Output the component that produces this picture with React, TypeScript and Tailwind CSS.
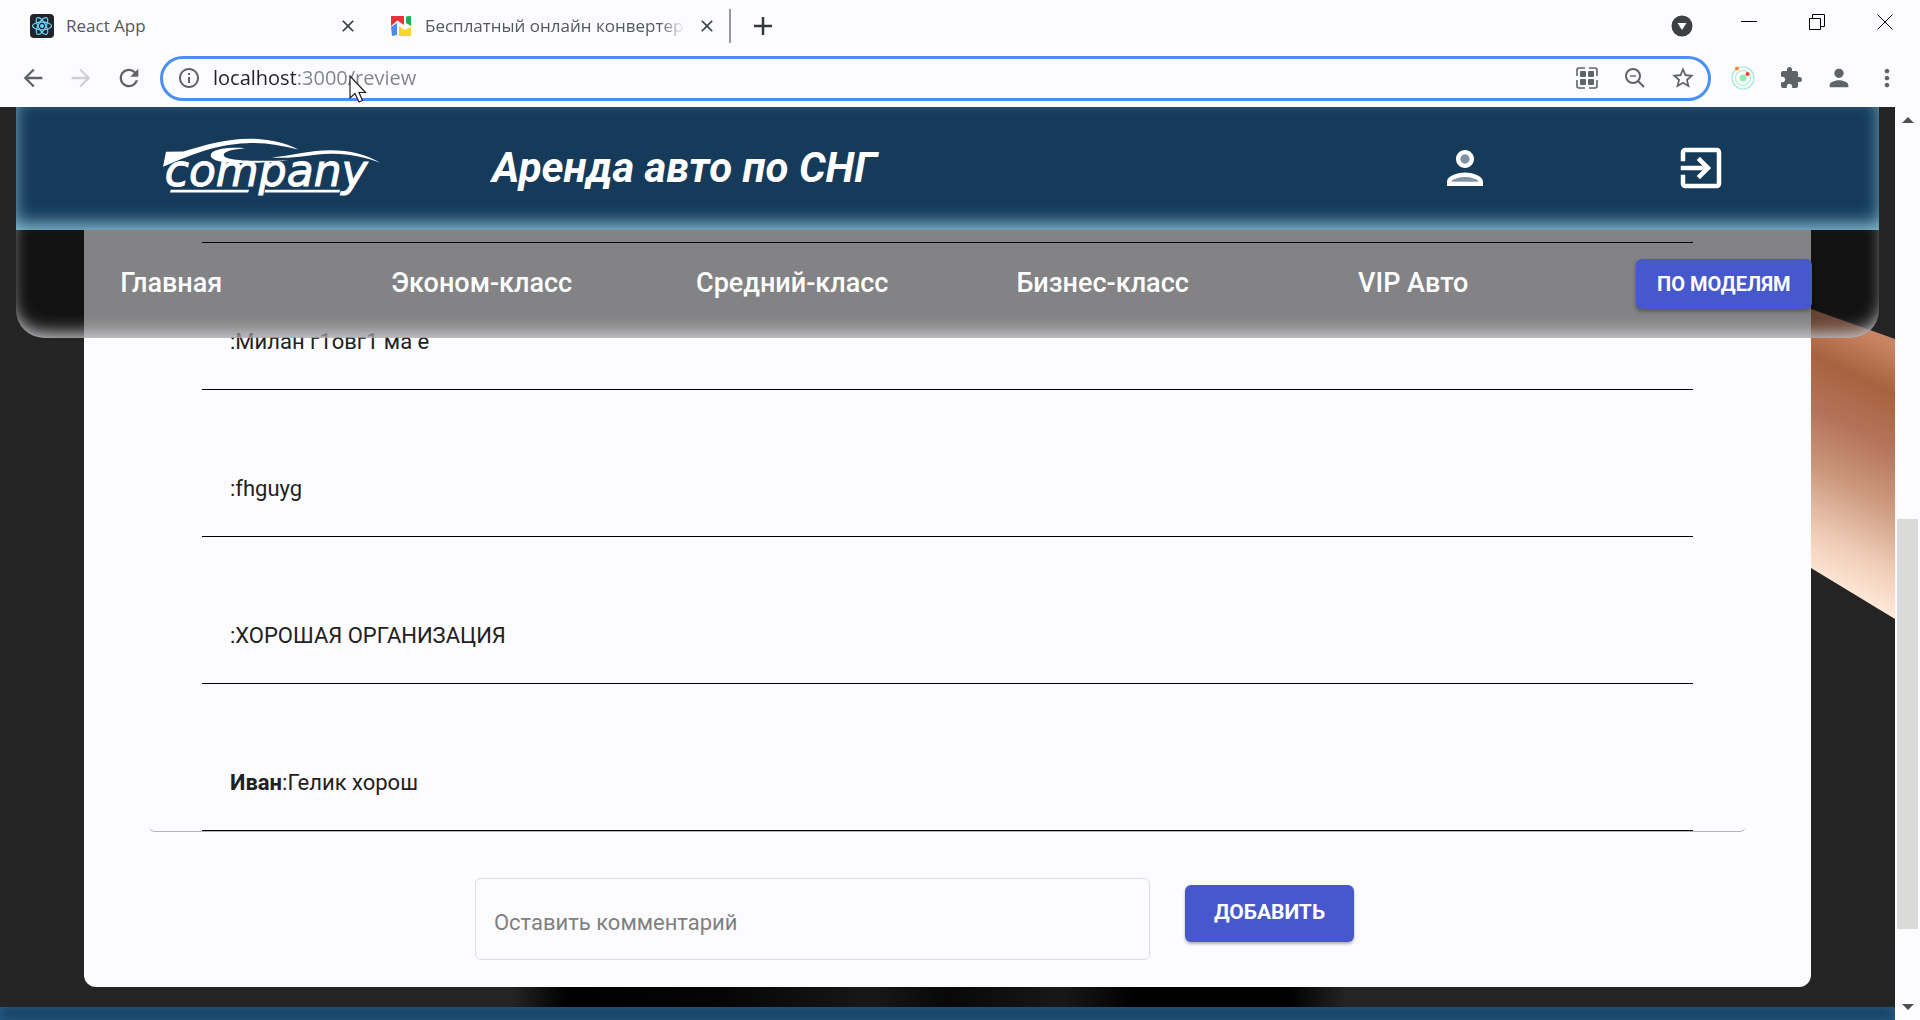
import type { ReactNode } from "react";
import {
  MdArrowBack,
  MdArrowForward,
  MdClose,
  MdExitToApp,
  MdExtension,
  MdInfoOutline,
  MdMoreVert,
  MdPerson,
  MdRefresh,
  MdStarBorder,
} from "react-icons/md";

const navItems = ["Главная", "Эконом-класс", "Средний-класс", "Бизнес-класс", "VIP Авто"];

const reviews = [
  { author: "", text: "" },
  { author: "", text: "Милан г1овг1 ма е" },
  { author: "", text: "fhguyg" },
  { author: "", text: "ХОРОШАЯ ОРГАНИЗАЦИЯ" },
  { author: "Иван", text: "Гелик хорош" },
];

function ReactFavicon() {
  return (
    <svg viewBox="0 0 24 24" className="size-6 shrink-0" aria-hidden="true">
      <rect width="24" height="24" rx="4" fill="#20232a" />
      <g fill="none" stroke="#61dafb" strokeWidth="1.2">
        <ellipse cx="12" cy="12" rx="9.5" ry="3.8" />
        <ellipse cx="12" cy="12" rx="9.5" ry="3.8" transform="rotate(60 12 12)" />
        <ellipse cx="12" cy="12" rx="9.5" ry="3.8" transform="rotate(120 12 12)" />
      </g>
      <circle cx="12" cy="12" r="2" fill="#61dafb" />
    </svg>
  );
}

function ConverterFavicon() {
  return (
    <svg viewBox="0 0 20 20" className="size-5 shrink-0" aria-hidden="true">
      <path d="M0 0H13V9L6.500 4.500L0 10Z" fill="#e5343c" />
      <path d="M15 1Q15 0 20 0V10L15 7Z" fill="#1fae53" />
      <path d="M0 11L6 7V19L1 20Z" fill="#4a8cf0" />
      <path d="M8 10L13.500 14L20 11V20H8Z" fill="#fbd62c" />
    </svg>
  );
}

function CompanyLogo() {
  return (
    <svg viewBox="36 40 656 212" className="h-[71px] w-[219px] shrink-0" fill="#fff" role="img" aria-label="company">
      <path d="M39 144L48 99L100 98C170 78 220 61 300 60C360 60 410 75 445 92C390 80 350 71 290 73C190 77 110 113 39 144Z" />
      <path d="M285 88C230 84 182 92 182 109C182 128 230 134 300 132C350 131 400 127 415 124C350 127 225 129 221 109C219 97 250 91 285 88Z" />
      <path d="M365 116C430 109 480 94 540 94C600 94 650 107 690 132C640 114 590 103 540 105C480 107 430 121 365 116Z" />
      <text
        x="44"
        y="202"
        fontSize="132"
        fontStyle="italic"
        fontFamily="DejaVu Sans, sans-serif"
        stroke="#fff"
        strokeWidth="3"
      >
        company
      </text>
      <path d="M62 213H297L294 221H60ZM345 213H570L567 221H343Z" />
    </svg>
  );
}

function PersonTwoTone() {
  return (
    <svg viewBox="0 0 24 24" className="size-[54px]" fill="currentColor" aria-hidden="true">
      <path opacity="0.45" d="M12 16c-2.690 0-5.770 1.280-6 2h12c-.2-.71-3.300-2-6-2z" />
      <circle opacity="0.45" cx="12" cy="8" r="2" />
      <path d="M12 14c-2.670 0-8 1.340-8 4v2h16v-2c0-2.660-5.330-4-8-4zm-6 4c.22-.72 3.310-2 6-2 2.700 0 5.800 1.290 6 2H6zm6-6c2.210 0 4-1.790 4-4s-1.790-4-4-4-4 1.790-4 4 1.790 4 4 4zm0-6c1.100 0 2 .9 2 2s-.9 2-2 2-2-.9-2-2 .9-2 2-2z" />
    </svg>
  );
}

function QrIcon() {
  return (
    <svg viewBox="0 0 22 22" className="size-[22px]" aria-hidden="true">
      <path
        d="M1 9V3Q1 1 3 1H9M13 1H19Q21 1 21 3V9M21 13V19Q21 21 19 21H13M9 21H3Q1 21 1 19V13"
        fill="none"
        stroke="#5f6368"
        strokeWidth="1.600"
      />
      <g fill="#5f6368">
        <rect x="4" y="4" width="6" height="6" rx="1" />
        <rect x="12" y="4" width="6" height="6" rx="1" />
        <rect x="4" y="12" width="6" height="6" rx="1" />
        <rect x="12" y="12" width="6" height="6" rx="1" />
      </g>
    </svg>
  );
}

function ZoomOutIcon() {
  return (
    <svg viewBox="0 0 20 20" className="size-5" fill="none" stroke="#5f6368" strokeWidth="2" aria-hidden="true">
      <circle cx="8" cy="8" r="7" />
      <path d="M13 13L19 19" />
      <path d="M5 8H11" strokeWidth="1.400" />
    </svg>
  );
}

function RadarIcon() {
  return (
    <svg viewBox="0 0 24 24" className="size-6" fill="none" aria-hidden="true">
      <circle cx="12" cy="12" r="11" stroke="#9fe8d8" strokeWidth="1.200" />
      <circle cx="12" cy="12" r="7.500" stroke="#a8f0c0" strokeWidth="1.200" />
      <circle cx="12" cy="12" r="3.500" fill="#8df0b8" />
      <circle cx="6" cy="2.500" r="2" fill="#f58a2c" />
      <circle cx="16.500" cy="8" r="2" fill="#ee4030" />
    </svg>
  );
}

function IconButton({ label, children }: { label: string; children: ReactNode }) {
  return (
    <button type="button" aria-label={label} className="flex size-12 shrink-0 items-center justify-center text-[#5f6368]">
      {children}
    </button>
  );
}

function BrowserChrome() {
  return (
    <div className="shrink-0 bg-[#fcfcff] font-['Open_Sans',sans-serif] text-[#3c4043]">
      <div className="flex h-[52px] items-center justify-between">
        <div className="flex items-center" role="tablist">
          <div className="flex w-[362px] items-center pr-1 pl-[30px]">
            <ReactFavicon />
            <button type="button" role="tab" aria-selected="true" className="ml-3 flex-1 text-left text-[17px] text-[#55585c]">
              React App
            </button>
            <button type="button" aria-label="Закрыть вкладку React App">
              <MdClose className="size-5" />
            </button>
          </div>
          <div className="flex w-[369px] items-center border-r-2 border-[#9a9a9e] py-1 pr-3 pl-[29px]">
            <ConverterFavicon />
            <button
              type="button"
              role="tab"
              aria-selected="false"
              className="mr-3 ml-[14px] flex-1 overflow-hidden [mask-image:linear-gradient(90deg,#000_90%,transparent)] text-left text-[17px] whitespace-nowrap text-[#55585c]"
            >
              Бесплатный онлайн конвертер
            </button>
            <button type="button" aria-label="Закрыть вкладку конвертера">
              <MdClose className="size-5" />
            </button>
          </div>
          <button type="button" aria-label="Новая вкладка" className="ml-[22px]">
            <svg viewBox="0 0 20 20" className="size-5" stroke="#35383b" strokeWidth="2.500" aria-hidden="true">
              <path d="M10 1V19M1 10H19" />
            </svg>
          </button>
        </div>
        <div className="flex items-center pr-[27px] text-black">
          <button type="button" aria-label="Поиск вкладок" className="mr-[48px]">
            <svg viewBox="0 0 22 22" className="size-[22px]" aria-hidden="true">
              <circle cx="11" cy="11" r="10.500" fill="#3c4043" />
              <path d="M6.500 8H15.500L11 15Z" fill="#fcfcff" />
            </svg>
          </button>
          <div className="flex gap-[52px] pb-2">
            <button type="button" aria-label="Свернуть">
              <svg viewBox="0 0 16 16" className="size-4" stroke="currentColor" aria-hidden="true">
                <path d="M0 7.500H16" />
              </svg>
            </button>
            <button type="button" aria-label="Восстановить">
              <svg viewBox="0 0 16 16" className="size-4" fill="none" stroke="currentColor" aria-hidden="true">
                <path d="M0.500 4.500H11.500V15.500H0.500ZM3.500 4V0.500H15.500V12.500H12" />
              </svg>
            </button>
            <button type="button" aria-label="Закрыть">
              <svg viewBox="0 0 16 16" className="size-4" stroke="currentColor" aria-hidden="true">
                <path d="M0.500 0.500L15.500 15.500M15.500 0.500L0.500 15.500" />
              </svg>
            </button>
          </div>
        </div>
      </div>

      <div className="flex h-[55px] items-center pr-[9px] pb-[3px] pl-[9px]">
        <IconButton label="Назад">
          <MdArrowBack className="size-7" />
        </IconButton>
        <IconButton label="Вперёд">
          <MdArrowForward className="size-7 text-[#cfd0d4]" />
        </IconButton>
        <IconButton label="Обновить">
          <MdRefresh className="size-7" />
        </IconButton>
        <div className="relative ml-[7px] flex h-[45px] flex-1 items-center rounded-full border-[3px] border-[#4a90f5] pr-px pl-[14px]">
          <MdInfoOutline className="size-6 shrink-0 text-[#5f6368]" />
          <input
            aria-label="Адресная строка"
            defaultValue="localhost:3000/review"
            className="ml-3 min-w-0 flex-1 bg-[linear-gradient(90deg,#202124_83px,#80848a_83px)] bg-clip-text text-xl text-transparent outline-none"
          />
          <svg viewBox="0 0 18 28" className="absolute top-4 left-[186px] h-7 w-[18px]" aria-hidden="true">
            <path d="M1 1V23L6 18.500L10 27L13.500 25.500L10 17.500H16.500Z" fill="#fff" stroke="#222" strokeWidth="1.200" />
          </svg>
          <IconButton label="QR-код">
            <QrIcon />
          </IconButton>
          <IconButton label="Масштаб">
            <ZoomOutIcon />
          </IconButton>
          <IconButton label="В закладки">
            <MdStarBorder className="size-[26px]" />
          </IconButton>
        </div>
        <div className="ml-2 flex">
          <IconButton label="Радар">
            <RadarIcon />
          </IconButton>
          <IconButton label="Расширения">
            <MdExtension className="size-6" />
          </IconButton>
          <IconButton label="Профиль">
            <MdPerson className="size-7" />
          </IconButton>
          <IconButton label="Меню">
            <MdMoreVert className="size-7" />
          </IconButton>
        </div>
      </div>
    </div>
  );
}

function SiteHeader() {
  return (
    <div className="absolute inset-x-4 top-0 z-10 text-white">
      <header className="flex h-[123px] items-center bg-[#153a5a] pr-[151px] pb-[2px] pl-[146px] shadow-[inset_0_-8px_18px_-2px_#8cc4d8]">
        <CompanyLogo />
        <h1 className="ml-[111px] text-[42px] leading-none font-bold whitespace-nowrap italic">Аренда авто по СНГ</h1>
        <div className="ml-auto flex gap-[182px]">
          <button type="button" aria-label="Личный кабинет">
            <PersonTwoTone />
          </button>
          <button type="button" aria-label="Выход">
            <MdExitToApp className="size-[54px]" />
          </button>
        </div>
      </header>
      <nav className="grid h-[108px] grid-cols-6 items-center justify-items-center rounded-b-[28px] bg-black/48 shadow-[inset_0_-10px_18px_-6px_#d8d8dc]">
        {navItems.map((item) => (
          <a key={item} href="#" className="pb-[2px] text-[27px] leading-8 font-medium whitespace-nowrap">
            {item}
          </a>
        ))}
        <button
          type="button"
          className="h-[50px] rounded-md bg-[#4757cc] px-[21px] text-xl font-bold whitespace-nowrap shadow-[0_2px_4px_rgba(0,0,0,0.4)]"
        >
          ПО МОДЕЛЯМ
        </button>
      </nav>
    </div>
  );
}

function HandBackdrop() {
  return (
    <svg viewBox="0 0 84 310" className="absolute top-[202px] right-0 h-[310px] w-[84px]" aria-hidden="true">
      <defs>
        <linearGradient id="skin" gradientUnits="userSpaceOnUse" x1="80" y1="0" x2="-40" y2="250">
          <stop offset="0" stopColor="#c98f74" />
          <stop offset="0.120" stopColor="#c98362" />
          <stop offset="0.270" stopColor="#a8623f" />
          <stop offset="0.450" stopColor="#b4735a" />
          <stop offset="0.650" stopColor="#cd9b80" />
          <stop offset="0.850" stopColor="#f0cdb8" />
          <stop offset="1" stopColor="#ffe9d8" />
        </linearGradient>
      </defs>
      <path d="M0 0L84 30V310L0 259Z" fill="url(#skin)" />
    </svg>
  );
}

function Reviews() {
  return (
    <main className="relative mx-[84px] rounded-b-xl bg-[#fcfcff] px-[65px] pb-[27px] text-[22px] text-[#212121]">
      <ul className="rounded-b-md border-b border-[#b5b5b8] px-[53px]">
        {reviews.map((review, i) => (
          <li key={i} className="flex h-[147px] items-center border-b border-black px-7 pt-[50px]">
            {review.text && (
              <p>
                <b>{review.author}</b>:{review.text}
              </p>
            )}
          </li>
        ))}
      </ul>
      <form className="mt-[46px] flex items-start justify-center gap-[35px] pr-[66px]" onSubmit={(e) => e.preventDefault()}>
        <input
          aria-label="Оставить комментарий"
          placeholder="Оставить комментарий"
          className="h-[82px] w-[42%] max-w-[675px] min-w-0 flex-auto rounded-md border border-[#dcdce0] px-[18px] pt-[6px] outline-none placeholder:text-[#808080]"
        />
        <button
          type="submit"
          className="mt-[7px] h-[57px] rounded-md bg-[#4757cc] px-[29px] pb-[2px] text-[21px] font-bold text-white shadow-[0_2px_3px_rgba(0,0,0,0.3)]"
        >
          ДОБАВИТЬ
        </button>
      </form>
    </main>
  );
}

function ScrollBar() {
  return (
    <div className="flex w-[25px] shrink-0 flex-col items-center bg-[#fcfcff] py-[10px]" aria-hidden="true">
      <svg viewBox="0 0 12 6" className="h-[6px] w-3">
        <path d="M0 6L6 0L12 6Z" fill="#505050" />
      </svg>
      <div className="flex-[396]" />
      <div className="w-[21px] flex-[410] bg-[#dadad8]" />
      <div className="flex-[75]" />
      <svg viewBox="0 0 12 6" className="h-[6px] w-3">
        <path d="M0 0L6 6L12 0Z" fill="#505050" />
      </svg>
    </div>
  );
}

export default function App() {
  return (
    <div className="flex h-screen flex-col overflow-hidden font-[Roboto,sans-serif]">
      <BrowserChrome />
      <div className="flex min-h-0 flex-1">
        <div className="relative flex min-w-0 flex-1 flex-col justify-end overflow-hidden bg-[#242424]">
          <HandBackdrop />
          <SiteHeader />
          <Reviews />
          <div className="h-5 shrink-0 bg-[linear-gradient(90deg,transparent_27%,#000_30%,#050505_38%,#181818_46%,#080808_50%,#181818_56%,#000_60%,#000_68%,transparent_71%)]" />
          <footer className="h-[13px] shrink-0 bg-[#173f5f] shadow-[inset_0_0_12px_#2a608c]" />
        </div>
        <ScrollBar />
      </div>
    </div>
  );
}
